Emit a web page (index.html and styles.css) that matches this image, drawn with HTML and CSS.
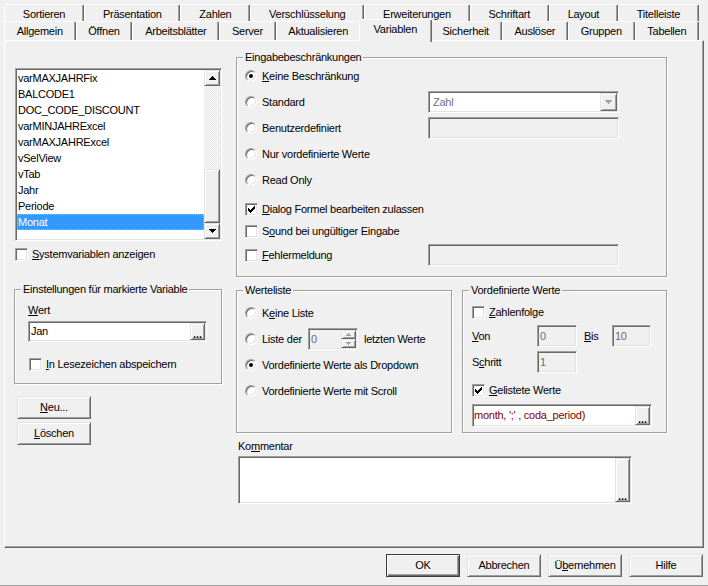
FILE: index.html
```html
<!DOCTYPE html>
<html lang="de">
<head>
<meta charset="utf-8">
<title>Dokumenteigenschaften – Variablen</title>
<link rel="stylesheet" href="styles.css">
</head>
<body>
<div class="dialog">
  <div class="tabs">
    <div class="tabrow back">
      <div class="tab">Sortieren</div>
      <div class="tab">Präsentation</div>
      <div class="tab">Zahlen</div>
      <div class="tab">Verschlüsselung</div>
      <div class="tab">Erweiterungen</div>
      <div class="tab">Schriftart</div>
      <div class="tab">Layout</div>
      <div class="tab">Titelleiste</div>
    </div>
    <div class="tabrow front">
      <div class="tab">Allgemein</div>
      <div class="tab">Öffnen</div>
      <div class="tab">Arbeitsblätter</div>
      <div class="tab">Server</div>
      <div class="tab">Aktualisieren</div>
      <div class="tab active">Variablen</div>
      <div class="tab">Sicherheit</div>
      <div class="tab">Auslöser</div>
      <div class="tab">Gruppen</div>
      <div class="tab">Tabellen</div>
    </div>
  </div>

  <div class="panel">
    <div class="col-left">
      <div class="listbox sunken">
        <ul class="items">
          <li>varMAXJAHRFix</li>
          <li>BALCODE1</li>
          <li>DOC_CODE_DISCOUNT</li>
          <li>varMINJAHRExcel</li>
          <li>varMAXJAHRExcel</li>
          <li>vSelView</li>
          <li>vTab</li>
          <li>Jahr</li>
          <li>Periode</li>
          <li class="selected">Monat</li>
        </ul>
        <div class="vscroll">
          <div class="sb-btn raised"><svg width="7" height="4" viewBox="0 0 7 4"><path d="M3 0H4V1H5V2H6V3H7V4H0V3H1V2H2V1H3Z"/></svg></div>
          <div class="sb-track"></div>
          <div class="sb-thumb raised"></div>
          <div class="sb-btn raised"><svg width="7" height="4" viewBox="0 0 7 4"><path d="M0 0H7V1H6V2H5V3H4V4H3V3H2V2H1V1H0Z"/></svg></div>
        </div>
      </div>

      <div class="check-row sys"><span class="checkbox"></span><span><u>S</u>ystemvariablen anzeigen</span></div>

      <div class="group settings">
        <div class="legend">Einstellungen für markierte Variable</div>
        <div class="field-label"><u>W</u>ert</div>
        <div class="field sunken value"><span class="field-text">Jan</span><span class="ellipsis raised">...</span></div>
        <div class="check-row bookmark"><span class="checkbox"></span><span><u>I</u>n Lesezeichen abspeichern</span></div>
      </div>

      <button class="btn btn-new"><u>N</u>eu...</button>
      <button class="btn btn-del"><u>L</u>öschen</button>
    </div>

    <div class="col-right">
      <div class="group restrict">
        <div class="legend">Eingabebeschränkungen</div>
        <div class="opt-row mt1">
          <div class="opt"><span class="radio on"></span><span><u>K</u>eine Beschränkung</span></div>
        </div>
        <div class="opt-row">
          <div class="opt"><span class="radio"></span><span>Standard</span></div>
          <div class="combo sunken">
            <span class="field-text combo-text">Zahl</span>
            <span class="combo-btn raised"><svg width="7" height="4" viewBox="0 0 7 4"><path d="M0 0H7V1H6V2H5V3H4V4H3V3H2V2H1V1H0Z"/></svg></span>
          </div>
        </div>
        <div class="opt-row">
          <div class="opt"><span class="radio"></span><span>Benutzerdefiniert</span></div>
          <div class="field sunken disabled wide"></div>
        </div>
        <div class="opt-row">
          <div class="opt"><span class="radio"></span><span>Nur vordefinierte Werte</span></div>
        </div>
        <div class="opt-row">
          <div class="opt"><span class="radio"></span><span>Read Only</span></div>
        </div>
        <div class="opt-row mt7">
          <div class="opt"><span class="checkbox"><svg width="7" height="7" viewBox="0 0 7 7"><path d="M0 2H1V3H2V4H3V3H4V2H5V1H6V0H7V3H6V4H5V5H4V6H3V7H2V6H1V5H0Z"/></svg></span><span><u>D</u>ialog Formel bearbeiten zulassen</span></div>
        </div>
        <div class="opt-row mt0">
          <div class="opt"><span class="checkbox"></span><span>S<u>o</u>und bei ungültiger Eingabe</span></div>
        </div>
        <div class="opt-row mt2">
          <div class="opt"><span class="checkbox"></span><span><u>F</u>ehlermeldung</span></div>
          <div class="field sunken disabled wide"></div>
        </div>
      </div>

      <div class="row2">
        <div class="group values">
          <div class="legend">Werteliste</div>
          <div class="opt-row mt5">
            <span class="radio"></span><span>K<u>e</u>ine Liste</span>
          </div>
          <div class="opt-row">
            <span class="radio"></span><span>Liste der</span>
            <div class="spinner field sunken disabled">
              <span class="field-text">0</span>
              <span class="spin">
                <span class="spin-btn raised"><svg width="5" height="3" viewBox="0 0 5 3"><path d="M2 0H3V1H4V2H5V3H0V2H1V1H2Z"/></svg></span>
                <span class="spin-btn raised"><svg width="5" height="3" viewBox="0 0 5 3"><path d="M0 0H5V1H4V2H3V3H2V2H1V1H0Z"/></svg></span>
              </span>
            </div>
            <span class="after-spin">letzten Werte</span>
          </div>
          <div class="opt-row">
            <span class="radio on"></span><span>Vordefinierte Werte als Dropdown</span>
          </div>
          <div class="opt-row">
            <span class="radio"></span><span>Vordefinierte Werte mit Scroll</span>
          </div>
        </div>

        <div class="group predefined">
          <div class="legend">Vordefinierte Werte</div>
          <div class="opt-row pd mt4">
            <span class="checkbox"></span><span><u>Z</u>ahlenfolge</span>
          </div>
          <div class="opt-row pd mt2">
            <span class="num-label"><u>V</u>on</span>
            <div class="field sunken disabled num"><span class="field-text">0</span></div>
            <span class="num-label short"><u>B</u>is</span>
            <div class="field sunken disabled num2"><span class="field-text">10</span></div>
          </div>
          <div class="opt-row pd">
            <span class="num-label">S<u>c</u>hritt</span>
            <div class="field sunken disabled num"><span class="field-text">1</span></div>
          </div>
          <div class="opt-row pd mt6">
            <span class="checkbox"><svg width="7" height="7" viewBox="0 0 7 7"><path d="M0 2H1V3H2V4H3V3H4V2H5V1H6V0H7V3H6V4H5V5H4V6H3V7H2V6H1V5H0Z"/></svg></span><span><u>G</u>elistete Werte</span>
          </div>
          <div class="field sunken formula"><span class="field-text formula-text">month, ';' , coda_period)</span><span class="ellipsis raised">...</span></div>
        </div>
      </div>

      <div class="comment-label">Ko<u>m</u>mentar</div>
      <div class="comment sunken"><span class="ellipsis raised">...</span></div>
    </div>
  </div>

  <div class="footer">
    <button class="btn default">OK</button>
    <button class="btn">Abbrechen</button>
    <button class="btn">Ü<u>b</u>ernehmen</button>
    <button class="btn">Hilfe</button>
  </div>
</div>
</body>
</html>
```

FILE: styles.css
```css
* { box-sizing: border-box; }
html, body { margin: 0; padding: 0; }
body {
  width: 708px;
  height: 586px;
  overflow: hidden;
  background: #f0f0f0;
  color: #000;
  font-family: "Liberation Sans", Arial, sans-serif;
  font-size: 11px;
  line-height: 13px;
  letter-spacing: -0.25px;
}
u { text-decoration: underline; text-underline-offset: 1px; }

.dialog {
  display: flex;
  flex-direction: column;
  width: 708px;
  height: 586px;
  border-bottom: 1px solid #a0a0a0;
}

/* ---------- Tabs ---------- */
.tabs { padding-top: 4px; flex: none; }
.tabrow { display: flex; margin: 0 9px 0 4px; }
.tab {
  flex: 1 1 auto;
  text-align: center;
  white-space: nowrap;
  background: #f0f0f0;
  border: 1px solid;
  border-bottom: 0;
  border-color: #fff #696969 transparent #fff;
  box-shadow: inset -1px 0 #a0a0a0;
  border-radius: 2px 2px 0 0;
}
.back .tab { height: 17px; padding-top: 3px; }
.front .tab { height: 19px; padding-top: 3px; }
.front .tab.active {
  height: 23px;
  margin: -2px -2px;
  padding: 3px 2px 0;
  position: relative;
  z-index: 2;
}

/* ---------- Panel ---------- */
.panel {
  flex: none;
  display: flex;
  align-items: flex-start;
  margin-left: 4px;
  width: 700px;
  height: 508px;
  border: 1px solid;
  border-color: #fff #696969 #696969 #fff;
  box-shadow: inset -1px -1px #a0a0a0;
}

.sunken {
  border: 1px solid;
  border-color: #a0a0a0 #fff #fff #a0a0a0;
  box-shadow: inset 1px 1px #696969, inset -1px -1px #e3e3e3;
  padding: 1px;
}
.raised {
  background: #f0f0f0;
  border: 1px solid;
  border-color: #e3e3e3 #696969 #696969 #e3e3e3;
  box-shadow: inset 1px 1px #fff, inset -1px -1px #a0a0a0;
}

/* ---------- Left column ---------- */
.col-left {
  display: flex;
  flex-direction: column;
  align-items: flex-start;
  width: 208px;
  margin-left: 9px;
  flex: none;
}
.listbox {
  display: flex;
  margin: 27px 0 0 1px;
  width: 207px;
  height: 173px;
  background: #fff;
}
.items {
  list-style: none;
  margin: 0;
  padding: 0;
  flex: 1;
  overflow: hidden;
}
.items li {
  height: 16px;
  line-height: 16px;
  padding-left: 1px;
  white-space: nowrap;
}
.items li.selected {
  background: #3399ff;
  color: #fff;
  outline: 1px dotted #e8b070;
  outline-offset: -1px;
}
.vscroll { width: 16px; display: flex; flex-direction: column; }
.sb-btn {
  height: 16px;
  display: flex;
  align-items: center;
  justify-content: center;
  flex: none;
}
.sb-track {
  flex: 1;
  background: repeating-conic-gradient(#ffffff 0 25%, #e4e4e4 0 50%) 0 0 / 2px 2px;
}
.sb-thumb { height: 54px; flex: none; }

.check-row { display: flex; align-items: center; height: 13px; white-space: nowrap; }
.checkbox {
  width: 13px;
  height: 13px;
  flex: none;
  margin-right: 4px;
  background: #fff;
  border: 1px solid;
  border-color: #a0a0a0 #fff #fff #a0a0a0;
  box-shadow: inset 1px 1px #696969, inset -1px -1px #e3e3e3;
  display: flex;
  align-items: center;
  justify-content: center;
}
.radio {
  width: 12px;
  height: 12px;
  flex: none;
  margin-right: 5px;
  border-radius: 50%;
  background: #fff;
  border: 1px solid;
  border-color: #a0a0a0 #fff #fff #a0a0a0;
  box-shadow: inset 1px 1px #696969, inset -1px -1px #e3e3e3;
  display: flex;
  align-items: center;
  justify-content: center;
}
.radio.on::after {
  content: "";
  width: 4px;
  height: 4px;
  border-radius: 50%;
  background: #000;
}
.sys { margin: 7px 0 0 1px; }

.group {
  display: flex;
  flex-direction: column;
  align-items: flex-start;
  border: 1px solid #a0a0a0;
  box-shadow: inset 1px 1px #fff, 1px 1px #fff;
  flex: none;
}
.legend {
  margin: -7px 0 0 6px;
  padding: 0 2px;
  background: #f0f0f0;
  line-height: 13px;
  white-space: nowrap;
}
.settings { margin-top: 28px; width: 208px; height: 95px; }
.field-label { margin: 8px 0 0 13px; }
.field {
  display: flex;
  align-items: center;
  background: #fff;
}
.field-text { flex: 1; padding-left: 1px; white-space: nowrap; overflow: hidden; }
.value { margin: 4px 0 0 13px; width: 179px; height: 21px; }
.ellipsis {
  width: 15px;
  align-self: stretch;
  flex: none;
  display: flex;
  align-items: flex-end;
  justify-content: center;
  font-weight: bold;
  letter-spacing: 0;
  line-height: 10px;
}
.bookmark { margin: 16px 0 0 14px; }

.btn {
  font: inherit;
  letter-spacing: inherit;
  color: #000;
  width: 74px;
  height: 23px;
  padding: 0;
  background: #f0f0f0;
  border: 1px solid;
  border-color: #e3e3e3 #696969 #696969 #e3e3e3;
  box-shadow: inset 1px 1px #fff, inset -1px -1px #a0a0a0;
  flex: none;
}
.btn.default {
  border-color: #3c3c3c;
  box-shadow: inset 1px 1px #fff, inset -1px -1px #696969, inset -2px -2px #a0a0a0;
}
.btn-new { margin: 12px 0 0 3px; }
.btn-del { margin: 3px 0 0 3px; }

/* ---------- Right column ---------- */
.col-right {
  display: flex;
  flex-direction: column;
  align-items: flex-start;
  width: 431px;
  margin-left: 14px;
  flex: none;
}
.restrict { margin-top: 16px; width: 431px; height: 220px; }
.opt-row {
  display: flex;
  align-items: center;
  height: 22px;
  margin: 4px 0 0 8px;
  white-space: nowrap;
  flex: none;
}
.opt { display: flex; align-items: center; width: 183px; }
.mt0 { margin-top: 0; }
.mt1 { margin-top: 1px; }
.mt2 { margin-top: 2px; }
.mt4 { margin-top: 4px; }
.mt5 { margin-top: 5px; }
.mt6 { margin-top: 6px; }
.mt7 { margin-top: 7px; }

.combo { display: flex; align-items: stretch; width: 191px; height: 22px; background: #fff; }
.combo-text { align-self: center; padding-left: 3px; color: #6d6d85; }
.combo-btn {
  width: 17px;
  flex: none;
  display: flex;
  align-items: center;
  justify-content: center;
}
.combo-btn svg path, .spin-btn svg path { fill: #a0a0a0; }
.disabled { background: #f0f0f0; color: #6d6d6d; }
.wide { width: 191px; height: 22px; }

.row2 { display: flex; gap: 10px; margin-top: 13px; flex: none; }
.values { width: 216px; height: 143px; }
.predefined { width: 205px; height: 143px; }

.spinner { width: 50px; height: 22px; margin-left: 6px; align-items: stretch; }
.spinner .field-text { align-self: center; padding-left: 1px; }
.spin { display: flex; flex-direction: column; width: 15px; flex: none; }
.spin-btn { flex: 1; display: flex; align-items: center; justify-content: center; }
.after-spin { margin-left: 6px; }

.pd { margin-left: 9px; }
.num-label { width: 65px; flex: none; }
.num-label.short { width: 28px; margin-left: 7px; }
.num { width: 40px; height: 22px; }
.num2 { width: 39px; height: 22px; }
.formula { margin: 3px 0 0 9px; width: 180px; height: 23px; }
.formula-text { padding-left: 0; color: #800000; }

.comment-label { margin: 7px 0 0 2px; }
.comment {
  display: flex;
  justify-content: flex-end;
  margin: 3px 0 0 2px;
  width: 394px;
  height: 48px;
  background: #fff;
}

/* ---------- Footer ---------- */
.footer {
  flex: none;
  display: flex;
  justify-content: flex-end;
  gap: 7px;
  height: 37px;
  padding: 6px 5px 0 0;
}
```
